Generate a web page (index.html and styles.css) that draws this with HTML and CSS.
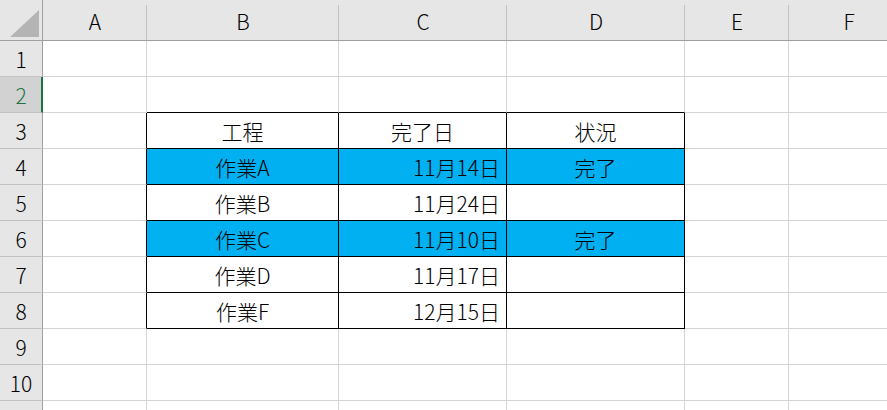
FILE: index.html
```html
<!DOCTYPE html>
<html lang="ja">
<head>
<meta charset="utf-8">
<link rel="stylesheet" href="styles.css">
</head>
<body>
<div class="sheet">
  <div class="corner"><span class="tri"></span></div>
  <div class="ch">A</div><div class="ch">B</div><div class="ch">C</div><div class="ch">D</div><div class="ch">E</div><div class="ch">F</div>

  <div class="rh">1</div><div class="c"></div><div class="c"></div><div class="c"></div><div class="c"></div><div class="c"></div><div class="c"></div>
  <div class="rh sel">2</div><div class="c"></div><div class="c bb"></div><div class="c bb"></div><div class="c bb"></div><div class="c"></div><div class="c"></div>

  <div class="rh">3</div><div class="c br"></div><div class="c t ctr">工程</div><div class="c t ctr">完了日</div><div class="c t ctr">状況</div><div class="c"></div><div class="c"></div>
  <div class="rh">4</div><div class="c br"></div><div class="c t blue ctr">作業A</div><div class="c t blue rt">11月14日</div><div class="c t blue ctr">完了</div><div class="c"></div><div class="c"></div>
  <div class="rh">5</div><div class="c br"></div><div class="c t ctr">作業B</div><div class="c t rt">11月24日</div><div class="c t"></div><div class="c"></div><div class="c"></div>
  <div class="rh">6</div><div class="c br"></div><div class="c t blue ctr">作業C</div><div class="c t blue rt">11月10日</div><div class="c t blue ctr">完了</div><div class="c"></div><div class="c"></div>
  <div class="rh">7</div><div class="c br"></div><div class="c t ctr">作業D</div><div class="c t rt">11月17日</div><div class="c t"></div><div class="c"></div><div class="c"></div>
  <div class="rh">8</div><div class="c br"></div><div class="c t ctr">作業F</div><div class="c t rt">12月15日</div><div class="c t"></div><div class="c"></div><div class="c"></div>

  <div class="rh">9</div><div class="c"></div><div class="c"></div><div class="c"></div><div class="c"></div><div class="c"></div><div class="c"></div>
  <div class="rh">10</div><div class="c"></div><div class="c"></div><div class="c"></div><div class="c"></div><div class="c"></div><div class="c"></div>
  <div class="rh"></div><div class="c"></div><div class="c"></div><div class="c"></div><div class="c"></div><div class="c"></div><div class="c"></div>
</div>
</body>
</html>
```

FILE: styles.css
```css
* { box-sizing: border-box; }
html, body {
  margin: 0;
  padding: 0;
  background: #ffffff;
  overflow: hidden;
}
body {
  width: 887px;
  height: 410px;
  font-family: "Noto Sans CJK JP", "Noto Sans", sans-serif;
  font-weight: 300;
  color: #000;
}
.sheet {
  display: grid;
  grid-template-columns: 43px 104px 192px 168px 178px 104px 120px;
  grid-template-rows: 41px repeat(10, 36px) 10px;
  height: 410px;
  overflow: hidden;
}
.corner {
  background: #e6e6e6;
  border-right: 1px solid #a0a0a0;
  border-bottom: 1px solid #a0a0a0;
  position: relative;
}
.tri {
  position: absolute;
  right: 3px;
  bottom: 3px;
  width: 0;
  height: 0;
  border-left: 29px solid transparent;
  border-bottom: 27px solid #b4b4b4;
}
.ch {
  background: #e6e6e6;
  border-bottom: 1px solid #a0a0a0;
  display: flex;
  align-items: center;
  justify-content: center;
  font-size: 21px;
  padding-top: 2px;
  position: relative;
}
.ch::after {
  content: "";
  position: absolute;
  right: 0;
  top: 5px;
  bottom: 0;
  width: 1px;
  background: #c2c2c2;
}
.rh {
  background: #e6e6e6;
  border-right: 1px solid #a0a0a0;
  border-bottom: 1px solid #c2c2c2;
  display: flex;
  align-items: center;
  justify-content: center;
  font-size: 21px;
  padding-top: 1px;
}
.rh.sel {
  background: #d2d2d2;
  color: #217346;
  border-right: 2px solid #217346;
  padding-left: 1px;
}
.c {
  border-right: 1px solid #d4d4d4;
  border-bottom: 1px solid #d4d4d4;
}
.c.bb { border-bottom-color: #000; }
.c.br { border-right-color: #000; }
.c.t {
  border-right-color: #000;
  border-bottom-color: #000;
  font-size: 21px;
  display: flex;
  align-items: center;
  padding-top: 1px;
}
.c.ctr { justify-content: center; }
.c.rt { justify-content: flex-end; padding-right: 6px; }
.c.blue { background: #00b0f0; }
```
